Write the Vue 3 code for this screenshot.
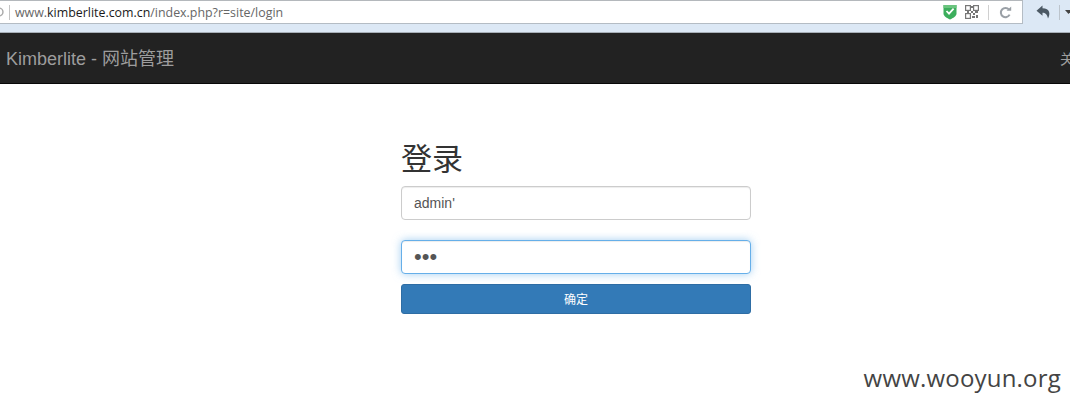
<template>
  <div class="page">
    <div class="chrome">
      <div class="urlbar">
        <svg class="lock" width="6" height="14" viewBox="0 0 6 14"><circle cx="-1" cy="7" r="4" fill="none" stroke="#aaa" stroke-width="1.4"/></svg>
        <span class="sep"></span>
        <span class="url">www.<b>kimberlite.com.cn</b>/index.php?r=site/login</span>
        <svg class="shield" width="14" height="16" viewBox="0 0 14 16">
          <path d="M0.500 1h13v8.500c0 2.600-3.400 4.600-6.500 6-3.100-1.400-6.500-3.400-6.500-6z" fill="#3cae5c"/>
          <path d="M0.500 1h13v3h-13z" fill="#6bc47f"/>
          <path d="M3.500 7l2.500 2.600 4.600-5" fill="none" stroke="#fff" stroke-width="1.800"/>
        </svg>
        <svg class="qr" width="14" height="14" viewBox="0 0 14 14">
          <g fill="none" stroke="#777" stroke-width="1.200"><rect x=".6" y=".6" width="4.800" height="4.800"/><rect x="8.600" y=".6" width="4.800" height="4.800"/><rect x=".6" y="8.600" width="4.800" height="4.800"/></g>
          <g fill="#777"><rect x="6" y="1" width="2" height="2"/><rect x="6" y="6" width="2" height="2"/><rect x="2" y="6" width="2" height="2"/><rect x="10" y="6" width="3" height="2"/><rect x="8" y="8" width="2" height="2"/><rect x="11" y="10" width="2" height="3"/><rect x="7" y="11" width="3" height="2"/></g>
        </svg>
        <span class="sep2"></span>
        <svg class="reload" width="13" height="13" viewBox="0 0 13 13"><path d="M10.600 8.600A4.600 4.600 0 1 1 10 3.600" fill="none" stroke="#9aa0a6" stroke-width="2"/><path d="M7.600 4.700h4.600V.6z" fill="#9aa0a6"/></svg>
      </div>
      <div class="tools">
        <svg width="15" height="14" viewBox="0 0 15 14"><path d="M6.500 .5L.5 5.700l6 5V7.800c2.800 0 4.600 1.400 5.500 5.700 2.600-4.800 2-9.900-5.500-10.200z" fill="#4c5964"/></svg>
        <span class="sep3"></span>
        <svg width="7" height="4" viewBox="0 0 7 4"><path d="M0 0h7L3.500 4z" fill="#444"/></svg>
      </div>
    </div>
    <nav class="navbar">
      <span class="brand">Kimberlite - 网站管理</span>
      <span class="link">关于</span>
    </nav>
    <main class="form">
      <h2>登录</h2>
      <input class="field" type="text" value="admin'" />
      <input class="field focus" type="password" value="abc" />
      <button class="submit">确定</button>
    </main>
    <div class="mark">www.wooyun.org</div>
  </div>
</template>

<script setup>
</script>

<style>
html, body { margin: 0; background: #fff; overflow: hidden; }
</style>

<style scoped>
.page {
  position: relative;
  width: 1070px;
  height: 407px;
  overflow: hidden;
  background: #fff;
  font-family: "Liberation Sans", "Noto Sans CJK SC", sans-serif;
}
.chrome {
  display: flex;
  height: 33px;
  box-sizing: border-box;
  background: #dce8f5;
  border-bottom: 1px solid #a8b0b8;
  align-items: flex-start;
}
.urlbar {
  display: flex;
  align-items: center;
  width: 1023px;
  height: 24px;
  box-sizing: border-box;
  background: #fff;
  border-top: 1px solid #b4b8bc;
  border-right: 1px solid #b4bcc4;
  border-bottom: 1px solid #b4bcc4;
  flex: none;
}
.lock { flex: none; }
.sep { width: 1px; height: 15px; background: #c4c4c4; margin-left: 3px; }
.url {
  margin-left: 5px;
  font-family: "Open Sans", "Liberation Sans", sans-serif;
  font-size: 12.400px;
  color: #666;
  flex: 1;
  white-space: nowrap;
}
.url b { font-weight: 400; color: #1a1a1a; }
.shield { flex: none; margin-right: 8px; }
.qr { flex: none; margin-right: 9px; }
.sep2 { width: 1px; height: 15px; background: #d0d0d0; margin-right: 10px; }
.reload { margin-right: 10px; flex: none; }
.tools {
  display: flex;
  align-items: center;
  height: 24px;
  padding-left: 13px;
  gap: 5px;
}
.sep3 { width: 1px; height: 15px; background: #bcc4cc; margin-left: 3px; }
.tools svg:last-child { flex: none; }
.navbar {
  display: flex;
  align-items: center;
  justify-content: space-between;
  height: 51px;
  box-sizing: border-box;
  width: 1088px;
  padding: 0 0 3px 6px;
  background: #222;
  border-bottom: 1px solid #080808;
}
.brand { font-size: 18px; color: #9d9d9d; }
.link { font-size: 14px; color: #9d9d9d; white-space: nowrap; margin-top: 2px; }
.form {
  display: flex;
  flex-direction: column;
  width: 350px;
  margin-left: 401px;
  padding-top: 58px;
}
h2 {
  margin: 0 0 8px;
  font-size: 31px;
  font-weight: 400;
  line-height: 36px;
  color: #333;
}
.field {
  width: 100%;
  height: 34px;
  box-sizing: border-box;
  padding: 6px 12px;
  margin-bottom: 20px;
  font-family: inherit;
  font-size: 14px;
  color: #555;
  background: #fff;
  border: 1px solid #ccc;
  border-radius: 4px;
  box-shadow: inset 0 1px 1px rgba(0, 0, 0, .075);
  outline: none;
}
.focus {
  margin-bottom: 10px;
  font-size: 22px;
  border-color: #66afe9;
  box-shadow: inset 0 1px 1px rgba(0, 0, 0, .075), 0 0 8px rgba(102, 175, 233, .6);
}
.submit {
  height: 30px;
  padding: 0 0 2px;
  font-family: inherit;
  font-size: 12px;
  color: #fff;
  background: #337ab7;
  border: 1px solid #2e6da4;
  border-radius: 3px;
}
.mark {
  position: absolute;
  right: 9px;
  top: 362px;
  font-family: "Open Sans", "DejaVu Sans", sans-serif;
  font-size: 24px;
  line-height: 32px;
  color: #444;
  letter-spacing: .2px;
}
</style>
